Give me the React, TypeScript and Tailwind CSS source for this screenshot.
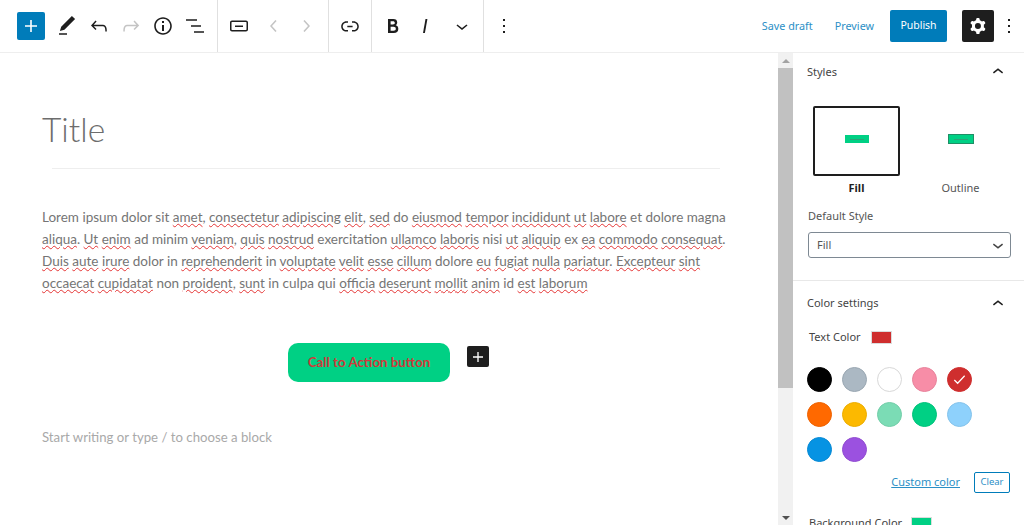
const lines = [
  "Lorem ipsum dolor sit amet, consectetur adipiscing elit, sed do eiusmod tempor incididunt ut labore et dolore magna",
  "aliqua. Ut enim ad minim veniam, quis nostrud exercitation ullamco laboris nisi ut aliquip ex ea commodo consequat.",
  "Duis aute irure dolor in reprehenderit in voluptate velit esse cillum dolore eu fugiat nulla pariatur. Excepteur sint",
  "occaecat cupidatat non proident, sunt in culpa qui officia deserunt mollit anim id est laborum",
];

const misspelled = new Set(
  "amet consectetur adipiscing elit sed eiusmod tempor incididunt ut labore aliqua Ut enim veniam quis nostrud ullamco laboris aliquip ea commodo consequat Duis aute irure reprehenderit voluptate velit esse cillum eu fugiat nulla pariatur Excepteur sint occaecat cupidatat proident sunt officia deserunt mollit anim est laborum".split(" ")
);

const swatches = [
  ["bg-black", "border-black"],
  ["bg-[#abb8c3]", "border-[#9aa7b2]"],
  ["bg-white", "border-[#d8d8d8]"],
  ["bg-[#f78da7]", "border-[#e8839c]"],
  ["bg-[#cf2e2e]", "border-[#cf2e2e]"],
  ["bg-[#ff6900]", "border-[#ee6200]"],
  ["bg-[#fcb900]", "border-[#ecad00]"],
  ["bg-[#7bdcb5]", "border-[#73cea9]"],
  ["bg-[#00d084]", "border-[#00c27b]"],
  ["bg-[#8ed1fc]", "border-[#85c3eb]"],
  ["bg-[#0693e3]", "border-[#0689d4]"],
  ["bg-[#9b51e0]", "border-[#914cd1]"],
];

function Icon({ d, className = "", evenOdd = false }: { d: string; className?: string; evenOdd?: boolean }) {
  return (
    <svg viewBox="0 0 24 24" width="24" height="24" className={className} fill="currentColor">
      <path d={d} fillRule={evenOdd ? "evenodd" : "nonzero"} clipRule={evenOdd ? "evenodd" : "nonzero"} />
    </svg>
  );
}

const icons = {
  plus: "M18 11.2h-5.2V6h-1.6v5.2H6v1.6h5.2V18h1.6v-5.2H18z",
  pencil: "M20.1 5.1L16.9 2 6.2 12.7l-1.3 4.4 4.5-1.3L20.1 5.1zM4 20.8h8v-1.5H4v1.5z",
  undo: "M18.3 11.7c-.6-.6-1.4-.9-2.3-.9H6.7l2.9-3.3-1.1-1-4.5 5L8.5 16l1-1-2.7-2.7H16c.5 0 .9.2 1.3.5 1 1 1 3.4 1 4.5v.3h1.5v-.2c0-1.5 0-4.3-1.5-5.7z",
  redo: "M15.6 6.5l-1.1 1 2.9 3.3H8c-.9 0-1.7.3-2.3.9-1.4 1.5-1.4 4.2-1.4 5.6v.2h1.5v-.3c0-1.1 0-3.5 1-4.5.3-.3.7-.5 1.3-.5h9.2L14.5 15l1.1 1.1 4.6-4.6-4.6-5z",
  info: "M12 3.2c-4.8 0-8.8 3.9-8.8 8.8 0 4.8 3.9 8.8 8.8 8.8 4.8 0 8.8-3.9 8.8-8.8 0-4.8-4-8.8-8.8-8.8zm0 16c-4 0-7.2-3.3-7.2-7.2C4.8 8 8 4.8 12 4.8s7.2 3.3 7.2 7.2c0 4-3.2 7.2-7.2 7.2zM11 17h2v-6h-2v6zm0-8h2V7h-2v2z",
  list: "M3 5.2h11v1.5H3zM8 11.2h10v1.5H8zM11 17.2h10v1.5H11z",
  block: "M19 6.5H5c-1.1 0-2 .9-2 2v7c0 1.1.9 2 2 2h14c1.1 0 2-.9 2-2v-7c0-1.1-.9-2-2-2zm.5 9c0 .3-.2.5-.5.5H5c-.3 0-.5-.2-.5-.5v-7c0-.3.2-.5.5-.5h14c.3 0 .5.2.5.5v7zM8 13h8v-1.5H8V13z",
  left: "M14.6 7l-1.2-1L8 12l5.4 6 1.2-1-4.6-5z",
  right: "M10.6 6L9.4 7l4.6 5-4.6 5 1.2 1 5.4-6z",
  link: "M15.6 7.2H14v1.5h1.6c2 0 3.7 1.7 3.7 3.7s-1.7 3.7-3.7 3.7H14v1.5h1.6c2.8 0 5.2-2.3 5.2-5.2 0-2.9-2.3-5.2-5.2-5.2zM4.7 12.4c0-2 1.7-3.7 3.7-3.7H10V7.2H8.4c-2.9 0-5.2 2.3-5.2 5.2 0 2.9 2.3 5.2 5.2 5.2H10v-1.5H8.4c-2 0-3.7-1.7-3.7-3.7zm4.6.9h5.3v-1.5H9.3v1.5z",
  bold: "M14.7 11.3c1-.6 1.5-1.6 1.5-3 0-2.3-1.3-3.4-4-3.4H7v14h5.8c1.4 0 2.5-.3 3.3-1 .8-.7 1.2-1.7 1.2-2.9.1-1.9-.8-3.1-2.6-3.7zm-5.1-4h2.3c.6 0 1.1.1 1.4.4.3.3.5.7.5 1.2s-.2 1-.5 1.2c-.3.3-.8.4-1.4.4H9.6V7.3zm4.6 9c-.4.3-1 .4-1.7.4H9.6v-3.9h2.9c.7 0 1.3.2 1.7.5.4.3.6.8.6 1.5s-.2 1.2-.6 1.5z",
  italic: "M12.5 5L10 19h1.9l2.5-14z",
  down: "M17.5 11.6L12 16l-5.5-4.4.9-1.2L12 14l4.5-3.6 1 1.2z",
  up: "M6.5 12.4L12 8l5.5 4.4-.9 1.2L12 10l-4.5 3.6-1-1.2z",
  more: "M13 19h-2v-2h2v2zm0-6h-2v-2h2v2zm0-6h-2V5h2v2z",
  cog: "M10.289 4.836A1 1 0 0111.275 4h1.306a1 1 0 01.987.836l.244 1.466c.787.26 1.503.679 2.108 1.218l1.393-.522a1 1 0 011.216.437l.653 1.13a1 1 0 01-.23 1.273l-1.148.944a6.025 6.025 0 010 2.435l1.149.946a1 1 0 01.23 1.272l-.653 1.13a1 1 0 01-1.216.437l-1.394-.522c-.605.54-1.32.958-2.108 1.218l-.244 1.466a1 1 0 01-.987.836h-1.306a1 1 0 01-.986-.836l-.244-1.466a5.995 5.995 0 01-2.108-1.218l-1.394.522a1 1 0 01-1.217-.436l-.653-1.131a1 1 0 01.23-1.272l1.149-.946a6.026 6.026 0 010-2.435l-1.148-.944a1 1 0 01-.23-1.272l.653-1.131a1 1 0 011.217-.437l1.393.522a5.994 5.994 0 012.108-1.218l.244-1.466zM14.929 12a3 3 0 11-6 0 3 3 0 016 0z",
};

function ToolButton({ d, muted = false, width = "w-8" }: { d: string; muted?: boolean; width?: string }) {
  return (
    <div className={`${width} h-8 flex items-center justify-center ${muted ? "text-[#c4c4c4]" : "text-[#1e1e1e]"}`}>
      <Icon d={d} />
    </div>
  );
}

function Toolbar() {
  return (
    <div className="h-[53px] shrink-0 flex border-b border-[#eeeeee] bg-white">
      <div className="w-[218px] flex items-center pl-[17px] border-r border-[#e0e0e0] h-[52px] shrink-0">
        <div className="w-7 h-7 -mt-[1px] mr-[6px] bg-[#007cba] rounded-[2px] text-white flex items-center justify-center">
          <Icon d={icons.plus} />
        </div>
        <ToolButton d={icons.pencil} />
        <ToolButton d={icons.undo} />
        <ToolButton d={icons.redo} muted />
        <ToolButton d={icons.info} />
        <ToolButton d={icons.list} />
      </div>
      <div className="w-[111px] flex items-center pl-[5px] border-r border-[#e0e0e0] h-[52px] shrink-0">
        <ToolButton d={icons.block} />
        <div className="ml-[3px]"><ToolButton d={icons.left} muted /></div>
        <ToolButton d={icons.right} muted />
      </div>
      <div className="w-[43px] flex items-center justify-center border-r border-[#e0e0e0] h-[52px] shrink-0">
        <ToolButton d={icons.link} />
      </div>
      <div className="w-[112px] flex items-center pl-[5px] border-r border-[#e0e0e0] h-[52px] shrink-0">
        <ToolButton d={icons.bold} />
        <ToolButton d={icons.italic} />
        <div className="ml-[5px]"><ToolButton d={icons.down} /></div>
      </div>
      <div className="pl-1 flex items-center h-[52px]">
        <ToolButton d={icons.more} />
      </div>
      <div className="ml-auto flex items-center h-[52px]">
        <span className="text-[10.8px] text-[#2b8fc6] mr-[22px]">Save draft</span>
        <span className="text-[10.8px] text-[#2b8fc6] mr-[16px]">Preview</span>
        <div className="w-[57px] h-8 -mt-[1px] bg-[#007cba] rounded-[2px] text-white text-[10.5px] flex items-center justify-center mr-[15px]">
          Publish
        </div>
        <div className="w-8 h-8 -mt-[1px] bg-[#1e1e1e] rounded-[2px] text-white flex items-center justify-center">
          <Icon d={icons.cog} evenOdd />
        </div>
        <div className="w-[30px] flex justify-center text-[#1e1e1e]">
          <Icon d={icons.more} />
        </div>
      </div>
    </div>
  );
}

function Paragraph() {
  return (
    <div className="mt-[37px] text-[13.5px] leading-[22px] text-[#757575] font-['Lato',sans-serif]">
      {lines.map((line) => (
        <div key={line} className="whitespace-nowrap">
          {line.split(" ").map((word, i) => {
            const bare = word.replace(/[.,]/g, "");
            const tail = word.slice(bare.length);
            return (
              <span key={i}>
                {i > 0 && " "}
                {misspelled.has(bare) ? (
                  <span className="underline decoration-wavy decoration-[#e53535] decoration-1">{bare}</span>
                ) : (
                  bare
                )}
                {tail}
              </span>
            );
          })}
        </div>
      ))}
    </div>
  );
}

function Editor() {
  return (
    <div className="w-[778px] shrink-0 pl-[42px] pr-[58px] pt-[51px] overflow-hidden">
      <div className="text-[33.5px] leading-[50px] font-light text-[#6d6d6d] font-['Lato',sans-serif]">Title</div>
      <div className="h-px bg-[#eeeeee] mt-[14px] ml-[10px]" />
      <Paragraph />
      <div className="mt-[49px] flex items-start pl-[246px]">
        <div className="w-[162px] h-[39px] rounded-[10px] bg-[#00d084] text-[#cf3a3a] text-[13.3px] font-bold font-['Lato',sans-serif] flex items-center justify-center">
          Call to Action button
        </div>
        <div className="ml-[17px] mt-[3px] w-[22px] h-[21px] bg-[#1e1e1e] rounded-[2px] text-white flex items-center justify-center">
          <Icon d={icons.plus} className="w-[20px] h-[20px]" />
        </div>
      </div>
      <div className="mt-[44px] text-[13.2px] leading-[22px] text-[#a9a9a9] font-['Lato',sans-serif]">
        Start writing or type / to choose a block
      </div>
    </div>
  );
}

function Scrollbar() {
  return (
    <div className="w-[15px] shrink-0 bg-[#f1f1f1] flex flex-col items-center relative">
      <div className="h-[15px] w-full flex items-center justify-center">
        <div className="w-0 h-0 border-x-[4px] border-x-transparent border-b-[4px] border-b-[#a3a3a3]" />
      </div>
      <div className="w-full h-[320px] bg-[#c1c1c1]" />
      <div className="mt-auto h-[15px] w-full flex items-center justify-center">
        <div className="w-0 h-0 border-x-[4px] border-x-transparent border-t-[4px] border-t-[#505050]" />
      </div>
    </div>
  );
}

function MiniButton({ outlined = false }: { outlined?: boolean }) {
  return (
    <div className={`bg-[#00d084] flex items-center justify-center ${outlined ? "w-[26px] h-[10px] border border-[#1f8f66]" : "w-[24px] h-[8px]"}`}>
      <div className="w-[14px] h-px bg-[#30a078]" />
    </div>
  );
}

function Sidebar() {
  return (
    <div className="flex-1 min-w-0 overflow-hidden text-[11px] text-[#1e1e1e]">
      <div className="h-[228px] pt-[9px] pl-[14px] pr-[13px] border-b border-[#e8e8e8]">
        <div className="flex items-center justify-between h-5">
          <span className="text-[#444] mt-px">Styles</span>
          <Icon d={icons.up} className="w-[22px] h-[22px] mr-[2px]" />
        </div>
        <div className="mt-[24px] flex">
          <div className="w-[87px] ml-[6px] flex flex-col items-center">
            <div className="w-[87px] h-[70px] border-2 border-[#1e1e1e] rounded-[2px] flex items-center justify-center pb-[4px]">
              <MiniButton />
            </div>
            <div className="mt-[4px] font-bold leading-[16px]">Fill</div>
          </div>
          <div className="w-[87px] ml-[17px] flex flex-col items-center">
            <div className="w-[87px] h-[70px] flex items-center justify-center pb-[4px]">
              <MiniButton outlined />
            </div>
            <div className="mt-[4px] leading-[16px] text-[#555]">Outline</div>
          </div>
        </div>
        <div className="mt-[12px] ml-[1px] leading-[16px] text-[#555]">Default Style</div>
        <div className="mt-[8px] ml-[1px] w-[203px] h-[26px] border border-[#7e8993] rounded-[3px] flex items-center justify-between pl-[8px] pr-[1px] text-[#555]">
          <span>Fill</span>
          <Icon d={icons.down} className="w-[22px] h-[22px] text-[#444]" />
        </div>
      </div>
      <div className="pt-[13px] pl-[14px] pr-[13px]">
        <div className="flex items-center justify-between h-5">
          <span className="text-[#444] -mt-px">Color settings</span>
          <Icon d={icons.up} className="w-[22px] h-[22px] mr-[2px]" />
        </div>
        <div className="mt-[15px] ml-[2px] flex items-center h-[16px]">
          <span className="text-[#444] w-[62px]">Text Color</span>
          <div className="w-[21px] h-[13px] bg-[#cf2e2e] border border-[#dcdcdc]" />
        </div>
        <div className="mt-[22px] grid grid-cols-[repeat(5,25px)] gap-x-[10px] gap-y-[10px]">
          {swatches.map(([bg, line], i) => (
            <div key={i} className={`w-[25px] h-[25px] rounded-full border ${bg} ${line} flex items-center justify-center`}>
              {i === 4 && (
                <svg viewBox="0 0 16 16" className="w-[15px] h-[15px] text-white" fill="none" stroke="currentColor" strokeWidth="1.3">
                  <path d="M2.5 8.5l3.5 3.5 7.5-8" />
                </svg>
              )}
            </div>
          ))}
        </div>
        <div className="mt-[10px] flex items-center justify-end pr-[1px]">
          <span className="text-[11px] text-[#2b8fc6] underline mr-[14px]">Custom color</span>
          <div className="w-[36px] h-[21px] border border-[#007cba] rounded-[2px] text-[9.5px] text-[#2b8fc6] flex items-center justify-center">
            Clear
          </div>
        </div>
        <div className="mt-[22px] ml-[2px] flex items-center h-[16px]">
          <span className="text-[#444] w-[102px] whitespace-nowrap">Background Color</span>
          <div className="w-[21px] h-[13px] bg-[#00d084] border border-[#dcdcdc]" />
        </div>
      </div>
    </div>
  );
}

export default function App() {
  return (
    <div className="w-[1024px] h-[525px] overflow-hidden bg-white flex flex-col font-['Noto_Sans',sans-serif]">
      <Toolbar />
      <div className="flex-1 min-h-0 flex">
        <Editor />
        <Scrollbar />
        <Sidebar />
      </div>
    </div>
  );
}
